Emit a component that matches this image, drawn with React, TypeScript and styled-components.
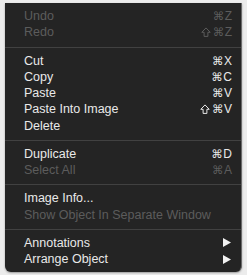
import styled, { createGlobalStyle } from "styled-components";

const GlobalStyle = createGlobalStyle`
    html, body {
        margin: 0;
        padding: 0;
        background: #ececec;
    }
    body {
        font-family: "Liberation Sans", "DejaVu Sans", sans-serif;
    }
`;

type Entry =
    | { kind: "item"; label: string; shift?: boolean; key?: string; disabled?: boolean; submenu?: boolean }
    | { kind: "sep" };

const entries: Entry[] = [
    { kind: "item", label: "Undo", key: "Z", disabled: true },
    { kind: "item", label: "Redo", shift: true, key: "Z", disabled: true },
    { kind: "sep" },
    { kind: "item", label: "Cut", key: "X" },
    { kind: "item", label: "Copy", key: "C" },
    { kind: "item", label: "Paste", key: "V" },
    { kind: "item", label: "Paste Into Image", shift: true, key: "V" },
    { kind: "item", label: "Delete" },
    { kind: "sep" },
    { kind: "item", label: "Duplicate", key: "D" },
    { kind: "item", label: "Select All", key: "A", disabled: true },
    { kind: "sep" },
    { kind: "item", label: "Image Info..." },
    { kind: "item", label: "Show Object In Separate Window", disabled: true },
    { kind: "sep" },
    { kind: "item", label: "Annotations", submenu: true },
    { kind: "item", label: "Arrange Object", submenu: true },
];

const Stage = styled.div`
    width: 247px;
    height: 275px;
    padding: 3px 0 0 5px;
    box-sizing: border-box;
`;

const Menu = styled.div`
    width: 237px;
    box-sizing: border-box;
    background: #242424;
    border-right: 1px solid #6a6a6a;
    border-radius: 0 0 6px 6px;
    padding: 5px 0 5px;
    display: flex;
    flex-direction: column;
    box-shadow: 0 1px 2px rgba(0, 0, 0, 0.35);
`;

const Row = styled.div<{ $disabled?: boolean }>`
    height: 16.25px;
    display: flex;
    align-items: center;
    justify-content: space-between;
    padding: 0 9px 0 19px;
    font-size: 12.5px;
    color: ${(p) => (p.$disabled ? "#5c5c5c" : "#e9e9e9")};
    white-space: nowrap;
`;

const Shortcut = styled.span`
    display: flex;
    align-items: center;
    font-size: 12px;
`;

const Cmd = styled.span`
    font-family: "DejaVu Sans", sans-serif;
    font-size: 11.5px;
    margin-right: 0.5px;
`;

const ShiftIcon = styled.svg`
    width: 10px;
    height: 10px;
    margin-right: 2px;
`;

const Separator = styled.div`
    height: 1px;
    background: #414141;
    margin: 6px 0 5px;
`;

const Arrow = styled.svg`
    width: 8px;
    height: 9px;
    margin-right: 1px;
`;

export default function App() {
    return (
        <>
            <GlobalStyle />
            <Stage>
                <Menu>
                    {entries.map((e, i) =>
                        e.kind === "sep" ? (
                            <Separator key={i} />
                        ) : (
                            <Row key={i} $disabled={e.disabled}>
                                <span>{e.label}</span>
                                {e.key && (
                                    <Shortcut>
                                        {e.shift && (
                                            <ShiftIcon viewBox="0 0 10 10">
                                                <path
                                                    d="M5 0.9 L9.2 5.3 H6.9 V9.4 H3.1 V5.3 H0.8 Z"
                                                    fill="none"
                                                    stroke="currentColor"
                                                    strokeWidth="1"
                                                    strokeLinejoin="round"
                                                />
                                            </ShiftIcon>
                                        )}
                                        <Cmd>⌘</Cmd>
                                        {e.key}
                                    </Shortcut>
                                )}
                                {e.submenu && (
                                    <Arrow viewBox="0 0 8 9">
                                        <path d="M0 0 L8 4.5 L0 9 Z" fill="#f2f2f2" />
                                    </Arrow>
                                )}
                            </Row>
                        )
                    )}
                </Menu>
            </Stage>
        </>
    );
}
